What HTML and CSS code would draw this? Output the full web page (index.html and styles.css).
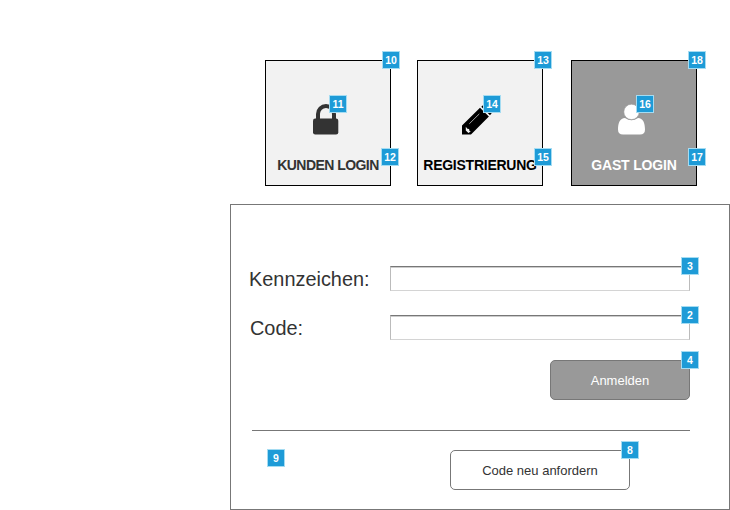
FILE: index.html
```html
<!DOCTYPE html>
<html lang="de">
<head>
<meta charset="utf-8">
<title>Login</title>
<link rel="stylesheet" href="styles.css">
</head>
<body>
<main class="page">
  <nav class="tiles">
    <a class="tile customer">
      <span class="icon">
        <svg width="26" height="31" viewBox="0 0 26 31"><path d="M5 16V10a8 8 0 0 1 16 0v6" fill="none" stroke="#333" stroke-width="4"/><rect x="0" y="14.5" width="25.3" height="16" rx="2.2" fill="#333"/></svg>
        <b class="badge on-icon">11</b>
      </span>
      <span class="caption">KUNDEN LOGIN</span>
      <b class="badge corner">10</b><b class="badge side">12</b>
    </a>
    <a class="tile registration">
      <span class="icon">
        <svg width="32" height="31" viewBox="0 0 32 31"><path d="M0 30.500V21.500L18 3.800 26.900 12.600 9 30.500zM19.300 2.700l2.400-2.200q1.500-1.200 3 0l5.500 5q1.200 1.500 0 3l-2.200 2.700z" fill="#000"/><path d="M3.800 22.800l1.600 2 1.700.3.400 1.900 1.300.6-2.400 1.300-2.600-2.300z" fill="#f2f2f2"/><path d="M7.300 19.800L17.300 9.900" fill="none" stroke="#ccc" stroke-width=".8"/></svg>
        <b class="badge on-icon">14</b>
      </span>
      <span class="caption">REGISTRIERUNG</span>
      <b class="badge corner">13</b><b class="badge side">15</b>
    </a>
    <a class="tile guest">
      <span class="icon">
        <svg width="28" height="31" viewBox="0 0 28 31"><path d="M7 14C2 14 0 19 0 25.500Q0 30.500 5 30.500H22Q27 30.500 27 25.500C27 19 25 14 20 14Q13.500 18.500 7 14z" fill="#fff"/><circle cx="13.500" cy="7.900" r="7.700" fill="#fff" stroke="#999" stroke-width=".6"/></svg>
        <b class="badge on-icon">16</b>
      </span>
      <span class="caption">GAST LOGIN</span>
      <b class="badge corner">18</b><b class="badge side">17</b>
    </a>
  </nav>
  <form class="panel">
    <div class="row"><label for="plate">Kennzeichen:</label><span class="field"><input id="plate" type="text"><b class="badge corner">3</b></span></div>
    <div class="row code"><label for="code">Code:</label><span class="field"><input id="code" type="text"><b class="badge corner">2</b></span></div>
    <button class="button submit" type="button">Anmelden<b class="badge corner">4</b></button>
    <div class="footer">
      <b class="badge note">9</b>
      <button class="button renew" type="button">Code neu anfordern<b class="badge corner">8</b></button>
    </div>
  </form>
</main>
</body>
</html>
```
FILE: styles.css
```css
* { box-sizing: border-box; }
body { margin: 0; background: #fff; color: #333; font-family: "Liberation Sans", Arial, sans-serif; }
.page { width: 730px; height: 510px; padding: 60px 0 0 230px; overflow: hidden; }
.tiles { display: grid; grid-template-columns: 126px 126px 126px; column-gap: 26px; padding-left: 35px; }
.tile { position: relative; display: flex; flex-direction: column; align-items: center; height: 126px; padding-top: 43px; border: 1px solid #000; background: #f2f2f2; }
.guest { left: 2px; background: #999; color: #fff; }
.registration { color: #000; }
.icon { position: relative; height: 31px; margin-right: 4px; }
.icon svg { display: block; }
.caption { margin-top: 22px; font-size: 14px; font-weight: bold; line-height: 16px; white-space: nowrap; }
.customer .caption { letter-spacing: -.55px; }
.registration .caption { letter-spacing: -.25px; }
.guest .caption { letter-spacing: -.15px; }
.badge { position: absolute; width: 18px; height: 18px; border: 1px solid #a5dcf2; background: #1e9bd7; color: #fff; font: bold 10.5px/16px "Liberation Sans", Arial, sans-serif; text-align: center; }
.tile .corner { top: -10px; right: -10px; }
.tile .side { top: 87px; right: -10px; }
.customer .side { right: -9px; }
.tile .on-icon { left: 16px; top: -9px; }
.registration .on-icon { left: 21px; }
.guest .on-icon { left: 18px; }
.panel { width: 500px; height: 306px; margin-top: 18px; padding: 61px 39px 0 18px; border: 1px solid #777; }
.row { display: flex; align-items: center; justify-content: space-between; height: 25px; margin-bottom: 24px; }
.row label { padding-top: 2px; font-size: 19.9px; line-height: 23px; }
.row.code label { padding-left: 1px; }
.field { position: relative; width: 300px; height: 25px; }
.field input { display: block; width: 100%; height: 25px; padding: 1px 4px; border: 1px solid #ccc; border-color: #777 #bbb #d4d4d4; background: #fff; box-shadow: inset 0 1px #ccc; outline: 0; font: 13px "Liberation Sans", Arial, sans-serif; }
.field .corner { top: -9px; right: -9px; }
.button { position: relative; display: block; height: 40px; padding: 2px 0 0; border: 1px solid #777; border-radius: 5px; font: 13px/36px "Liberation Sans", Arial, sans-serif; }
.button .corner { top: -10px; right: -10px; }
.submit { width: 140px; margin: -4px 0 0 auto; background: #999; color: #fff; }
.footer { position: relative; display: flex; justify-content: flex-end; height: 61px; margin: 30px 0 0 3px; padding: 19px 60px 0 0; border-top: 1px solid #777; }
.renew { width: 180px; background: #fff; color: #333; }
.note { left: 15px; top: 18px; }
```
